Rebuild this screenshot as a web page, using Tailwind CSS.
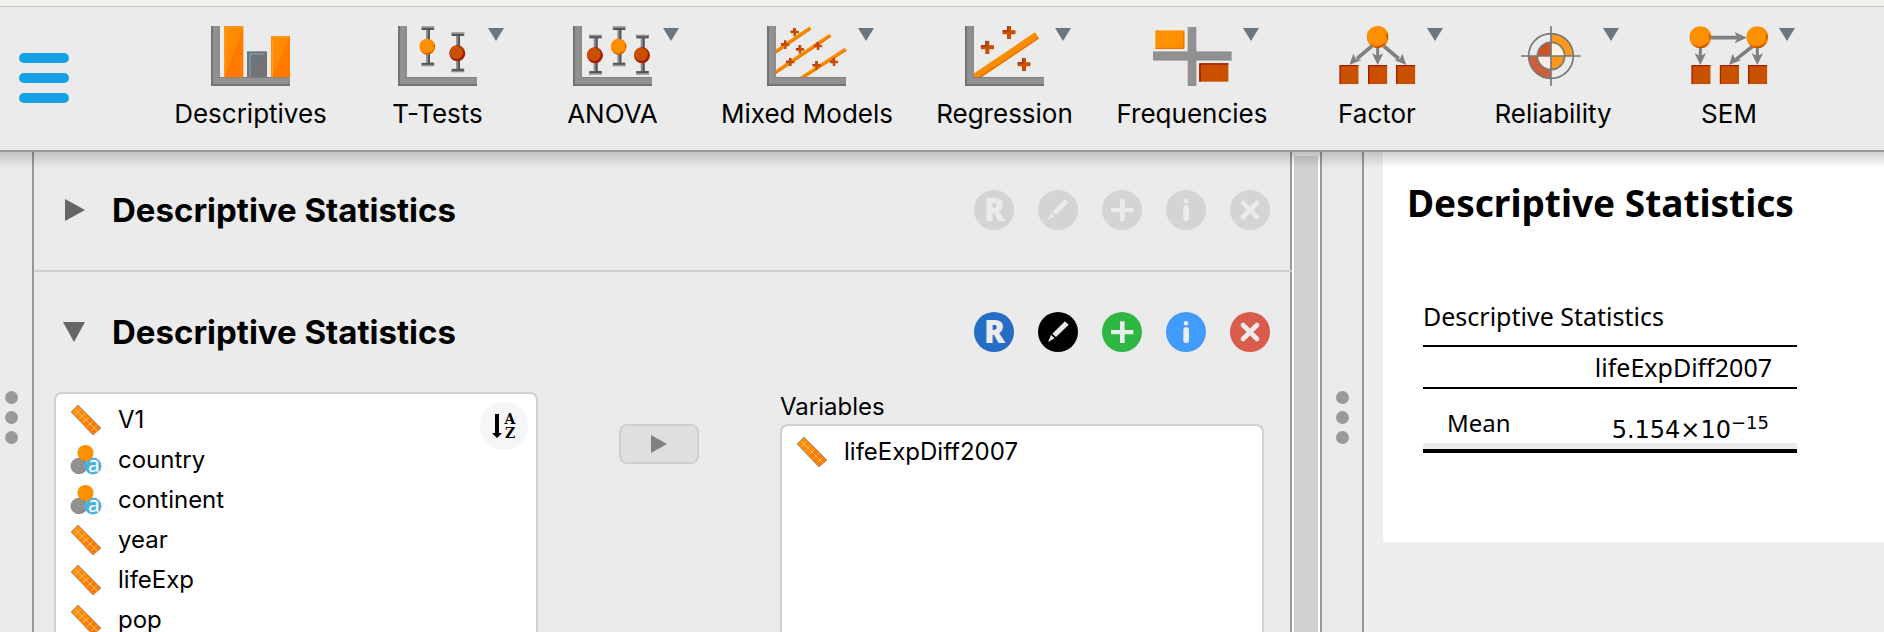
<!DOCTYPE html>
<html lang="en">
<head>
<meta charset="utf-8">
<title>Descriptive Statistics</title>
<script src="https://cdn.jsdelivr.net/npm/@tailwindcss/browser@4"></script>
</head>
<body class="flex h-screen flex-col overflow-hidden bg-[#ebebeb] font-['Inter',sans-serif] text-black">

<!-- Shared icon shapes -->
<svg class="absolute size-0" aria-hidden="true">
  <defs>
    <linearGradient id="orange" x1="0" y1="0" x2="1" y2="1"><stop offset="0" stop-color="#ff9100"/><stop offset=".5" stop-color="#ff8800"/><stop offset=".52" stop-color="#ff7b00"/><stop offset="1" stop-color="#ff7b00"/></linearGradient>
    <linearGradient id="slate" x1="0" y1="0" x2="1" y2="1"><stop offset="0" stop-color="#667681"/><stop offset=".5" stop-color="#6b757c"/><stop offset=".52" stop-color="#737373"/><stop offset="1" stop-color="#737373"/></linearGradient>
    <symbol id="axes" viewBox="0 0 240 180">
      <path d="M0 0H26V153H237V180H0Z" fill="#919191"/>
      <path d="M0 0H6V174H237V180H0Z" fill="#737373"/>
      <path d="M23 0H26V153H237V156H23Z" fill="#808080"/>
    </symbol>
    <symbol id="ebar" viewBox="0 0 48 122" overflow="visible">
      <path d="M5 1H44V12H31V110H44V121H5V110H19V12H5Z" fill="#919191"/>
      <path d="M7 6H42V12H31V110H42V116H7V111H25V12H7Z" fill="#555"/>
    </symbol>
    <symbol id="plus" viewBox="-20 -20 40 40"><path d="M-6-20H6V-6H20V6H6V20H-6V6H-20V-6H-6Z" fill="#c85000"/><path d="M-6-20H-2V-2H-20V-6H-6Z" fill="#b03010"/></symbol>
    <symbol id="ball" viewBox="-33 -33 66 66"><circle r="33" fill="#fb8c00"/><path d="M-24 19A33 33 0 0 0 31 -8L24 -8A27 27 0 0 1 -24 19Z" fill="#c85000"/><circle cx="-3" cy="-4" r="26" fill="#ff9100"/></symbol>
    <symbol id="box" viewBox="0 0 58 58"><path d="M0 0H58V58H0Z" fill="#c85000"/><path d="M0 0H58V4H4V58H0Z" fill="#a81c00"/></symbol>
    <symbol id="caret" viewBox="0 0 16 13"><path d="M0 0H16L8 13Z" fill="#6b7780"/></symbol>
    <symbol id="scale" viewBox="0 0 32 32">
      <path d="M8 1L31 24L23 31L1 8Z" fill="#ff8500" stroke="#999" stroke-width="1"/>
      <path d="M8 2L30 24L23 30L2 8Z" fill="url(#orange)"/>
      <path d="M5 5L27 27M11 5L5 11M15 9L9 15M19 13L13 19M23 17L17 23M27 21L21 27" stroke="#ffb45c" stroke-width="1" fill="none"/>
    </symbol>
    <symbol id="nominal" viewBox="0 0 32 32">
      <circle cx="9" cy="22" r="8" fill="#6f7980"/><circle cx="8" cy="22" r="7.500" fill="#919191"/>
      <circle cx="23" cy="22" r="8.500" fill="#4db1e2"/>
      <circle cx="15.500" cy="9" r="8" fill="#fb8c00"/><circle cx="15" cy="9" r="7" fill="#ff9100"/>
      <text x="24" y="28" text-anchor="middle" font-family="Noto Sans" font-size="21" fill="#fff">a</text>
    </symbol>
    <symbol id="glyph-r" viewBox="0 0 40 40"><circle cx="20" cy="20" r="20"/><text x="20.500" y="30.500" text-anchor="middle" font-family="Open Sans" font-weight="800" font-size="31" fill="#ebebeb">R</text></symbol>
    <symbol id="glyph-edit" viewBox="0 0 120 120"><circle cx="60" cy="60" r="60"/><path d="M81 28L92 38L54 75L43 65ZM39 69L50 79L30 90Z" fill="#ebebeb"/></symbol>
    <symbol id="glyph-add" viewBox="0 0 120 120"><circle cx="60" cy="60" r="60"/><path d="M54 28H68V54H94V67H68V93H54V67H27V54H54Z" fill="#ebebeb"/></symbol>
    <symbol id="glyph-info" viewBox="0 0 120 120"><circle cx="60" cy="60" r="60"/><circle cx="60" cy="34" r="7" fill="#ebebeb"/><rect x="52" y="46" width="17" height="47" rx="7" fill="#ebebeb"/></symbol>
    <symbol id="glyph-close" viewBox="0 0 120 120"><circle cx="60" cy="60" r="60"/><path d="M39 39L81 81M81 39L39 81" stroke="#ebebeb" stroke-width="14" stroke-linecap="round"/></symbol>
  </defs>
</svg>

<div class="h-[7px] shrink-0 border-b border-[#c8c8c8] bg-[#f1f1ee]"></div>

<header class="flex h-[145px] shrink-0 border-b-2 border-[#999]">
  <button class="mt-[46px] ml-[19px] flex h-[50px] w-[50px] shrink-0 flex-col justify-between" aria-label="Menu">
    <span class="h-[10px] w-full rounded-full bg-[#17a1e5]"></span>
    <span class="h-[10px] w-full rounded-full bg-[#17a1e5]"></span>
    <span class="h-[10px] w-full rounded-full bg-[#17a1e5]"></span>
  </button>
  <nav class="ml-[82px] flex pt-[19px] text-[26px] leading-[32px] whitespace-nowrap">
    <button class="flex w-[199px] flex-col items-center gap-3">
      <svg class="h-[60px] w-[80px]" viewBox="0 0 240 180">
        <use href="#axes" width="240" height="180"/>
        <path d="M39 0H97V154H39Z" fill="url(#orange)"/><path d="M42 154V4H94" fill="none" stroke="#ff9d33" stroke-width="3"/>
        <path d="M108 76H168V154H108Z" fill="url(#slate)"/><path d="M117 154V84H160" fill="none" stroke="#8b959b" stroke-width="4"/>
        <path d="M180 30H237V154H180Z" fill="url(#orange)"/><path d="M184 154V34H236" fill="none" stroke="#ff9d33" stroke-width="3"/>
      </svg>
      Descriptives
    </button>
    <button class="relative flex w-[175px] flex-col items-center gap-3">
      <svg class="h-[60px] w-[80px]" viewBox="0 0 240 180">
        <use href="#axes" width="240" height="180"/>
        <use href="#ebar" x="65" y="0" width="48" height="122"/><use href="#ball" x="64" y="38" width="48" height="48"/>
        <use href="#ebar" x="155" y="18" width="48" height="122"/><circle cx="178" cy="82" r="24" fill="#a81c00"/><circle cx="175" cy="79" r="20" fill="#c85000"/>
      </svg>
      T-Tests
      <svg class="absolute top-[2px] left-[138px] h-[13px] w-4"><use href="#caret"/></svg>
    </button>
    <button class="relative flex w-[175px] flex-col items-center gap-3">
      <svg class="h-[60px] w-[80px]" viewBox="0 0 240 180">
        <use href="#axes" width="240" height="180"/>
        <use href="#ebar" x="43" y="25" width="48" height="122"/><circle cx="66" cy="88" r="24" fill="#a81c00"/><circle cx="63" cy="85" r="20" fill="#c85000"/>
        <use href="#ebar" x="114" y="0" width="48" height="122"/><use href="#ball" x="113" y="38" width="48" height="48"/>
        <use href="#ebar" x="184" y="25" width="48" height="122"/><circle cx="207" cy="88" r="24" fill="#a81c00"/><circle cx="204" cy="85" r="20" fill="#c85000"/>
      </svg>
      ANOVA
      <svg class="absolute top-[2px] left-[138px] h-[13px] w-4"><use href="#caret"/></svg>
    </button>
    <button class="relative flex w-[214px] flex-col items-center gap-3">
      <svg class="h-[60px] w-[80px]" viewBox="0 0 240 180">
        <path d="M24 79L130 6M24 140L190 28M100 158L236 70" stroke="#fb8c00" stroke-width="11"/>
        <path d="M26 80L132 9M26 141L192 31M102 159L238 73" stroke="#e67300" stroke-width="3"/>
        <use href="#axes" width="240" height="180"/>
        <use href="#plus" x="70" y="5" width="26" height="26"/><use href="#plus" x="42" y="43" width="26" height="26"/><use href="#plus" x="86" y="57" width="26" height="26"/><use href="#plus" x="140" y="47" width="26" height="26"/><use href="#plus" x="57" y="95" width="26" height="26"/><use href="#plus" x="136" y="105" width="26" height="26"/><use href="#plus" x="188" y="95" width="26" height="26"/>
      </svg>
      Mixed Models
      <svg class="absolute top-[2px] left-[158px] h-[13px] w-4"><use href="#caret"/></svg>
    </button>
    <button class="relative flex w-[181px] flex-col items-center gap-3">
      <svg class="h-[60px] w-[80px]" viewBox="0 0 240 180">
        <path d="M26 156L216 28" stroke="#fb8c00" stroke-width="22"/><path d="M30 164L221 36" stroke="#e67300" stroke-width="4"/>
        <use href="#axes" width="240" height="180"/>
        <use href="#plus" x="112" y="-1" width="40" height="40"/><use href="#plus" x="47" y="44" width="40" height="40"/><use href="#plus" x="157" y="95" width="40" height="40"/>
      </svg>
      Regression
      <svg class="absolute top-[2px] left-[141px] h-[13px] w-4"><use href="#caret"/></svg>
    </button>
    <button class="relative flex w-[194px] flex-col items-center gap-3">
      <svg class="h-[60px] w-[80px]" viewBox="0 0 240 180">
        <path d="M107 3H133V77H239V103H133V180H107V103H3V77H107Z" fill="#919191"/>
        <path d="M3 78H239M3 102H239" stroke="#7f8386" stroke-width="2"/>
        <path d="M107 77H133V103H107Z" fill="#919191"/>
        <path d="M10 13H97V68H10Z" fill="#ff9100"/><path d="M11 67H96M95 16V66" stroke="#ff6a00" stroke-width="4"/>
        <path d="M142 112H229V167H142Z" fill="#c85000"/><path d="M144 167V114H229" fill="none" stroke="#a81c00" stroke-width="5"/>
      </svg>
      Frequencies
      <svg class="absolute top-[2px] left-[148px] h-[13px] w-4"><use href="#caret"/></svg>
    </button>
    <button class="relative flex w-[176px] flex-col items-center gap-3">
      <svg class="h-[60px] w-[80px]" viewBox="0 0 240 180">
        <path d="M105 60L60 98M140 60L185 98" stroke="#808080" stroke-width="11"/><path d="M122 64V96" stroke="#808080" stroke-width="9"/>
        <path d="M37 117L49 83L56 98L74 102ZM208 117L196 83L189 98L171 102ZM122 117L105 82L122 90L139 82Z" fill="#808080"/>
        <use href="#ball" x="89" y="0" width="66" height="66"/>
        <use href="#box" x="7" y="117" width="58" height="58"/><use href="#box" x="93" y="117" width="58" height="58"/><use href="#box" x="177" y="117" width="58" height="58"/>
      </svg>
      Factor
      <svg class="absolute top-[2px] left-[138px] h-[13px] w-4"><use href="#caret"/></svg>
    </button>
    <button class="relative flex w-[176px] flex-col items-center gap-3">
      <svg class="h-[60px] w-[80px]" viewBox="0 0 240 180">
        <path d="M114 90V22A68 68 0 0 1 182 90Z" fill="#fb9a1a"/>
        <path d="M114 90V158A68 68 0 0 1 46 90Z" fill="#cd6038"/>
        <circle cx="114" cy="90" r="41" fill="#fcebe5"/>
        <path d="M114 90H73A41 41 0 0 1 114 49Z" fill="#cb5327"/>
        <path d="M114 90V49A41 41 0 0 1 155 90Z" fill="#fff3e0"/>
        <path d="M114 90H155A41 41 0 0 1 114 131Z" fill="#fb9a1a"/>
        <g fill="none" stroke="#787878" stroke-width="5"><circle cx="114" cy="90" r="67"/><circle cx="114" cy="90" r="41"/><path d="M114 0V180M24 90H203"/></g>
      </svg>
      Reliability
      <svg class="absolute top-[2px] left-[138px] h-[13px] w-4"><use href="#caret"/></svg>
    </button>
    <button class="relative flex w-[176px] flex-col items-center gap-3">
      <svg class="h-[60px] w-[80px]" viewBox="0 0 240 180">
        <path d="M34 64V96M205 64V96" stroke="#808080" stroke-width="9"/>
        <path d="M66 35H148M192 60L141 100" stroke="#808080" stroke-width="11"/>
        <path d="M34 117L17 82L34 90L51 82ZM205 117L188 82L205 90L222 82ZM174 35L137 18L146 35L137 52ZM120 117L131 83L138 98L157 102Z" fill="#808080"/>
        <use href="#ball" x="1" y="1" width="66" height="66"/><use href="#ball" x="172" y="1" width="66" height="66"/>
        <use href="#box" x="7" y="117" width="58" height="58"/><use href="#box" x="92" y="117" width="58" height="58"/><use href="#box" x="177" y="117" width="58" height="58"/>
      </svg>
      SEM
      <svg class="absolute top-[2px] left-[138px] h-[13px] w-4"><use href="#caret"/></svg>
    </button>
  </nav>
</header>

<main class="relative flex min-h-0 flex-1">
  <!-- Shadow cast by the toolbar -->
  <div class="pointer-events-none absolute inset-x-0 top-0 z-10 h-4 bg-linear-to-b from-black/18 to-transparent"></div>

  <div class="flex w-[34px] shrink-0 flex-col items-center gap-[7px] border-r-2 border-[#999] pt-[239px] pr-[10px]">
    <span class="size-[13px] rounded-full bg-[#999]"></span><span class="size-[13px] rounded-full bg-[#999]"></span><span class="size-[13px] rounded-full bg-[#999]"></span>
  </div>

  <div class="flex w-[1258px] shrink-0 flex-col border-r-2 border-[#999]">
    <section class="-mr-[2px] flex h-[120px] shrink-0 items-center border-b-2 border-[#d0d0d0] pr-[22px] pb-[2px] pl-7">
      <button class="flex h-10 w-[50px] items-center pl-[3px]" aria-label="Expand"><svg class="h-[22px] w-[20px]" viewBox="0 0 20 22"><path d="M0 0L20 11L0 22Z" fill="#666"/></svg></button>
      <h2 class="flex-1 text-[33px] leading-10 font-bold">Descriptive Statistics</h2>
      <div class="flex gap-6 text-[#d4d4d4]">
        <button class="size-10" aria-label="Show R syntax"><svg class="size-10 fill-current"><use href="#glyph-r"/></svg></button>
        <button class="size-10" aria-label="Edit title"><svg class="size-10 fill-current"><use href="#glyph-edit"/></svg></button>
        <button class="size-10" aria-label="Duplicate"><svg class="size-10 fill-current"><use href="#glyph-add"/></svg></button>
        <button class="size-10" aria-label="Information"><svg class="size-10 fill-current"><use href="#glyph-info"/></svg></button>
        <button class="size-10" aria-label="Remove"><svg class="size-10 fill-current"><use href="#glyph-close"/></svg></button>
      </div>
    </section>
    <section class="flex h-[120px] shrink-0 items-center pr-5 pl-7">
      <button class="flex h-10 w-[50px] items-center pl-[1px]" aria-label="Collapse"><svg class="h-[20px] w-[22px]" viewBox="0 0 22 20"><path d="M0 0H22L11 20Z" fill="#666"/></svg></button>
      <h2 class="flex-1 text-[33px] leading-10 font-bold">Descriptive Statistics</h2>
      <div class="flex gap-6">
        <button class="size-10 text-[#266dc6]" aria-label="Show R syntax"><svg class="size-10 fill-current"><use href="#glyph-r"/></svg></button>
        <button class="size-10 text-black" aria-label="Edit title"><svg class="size-10 fill-current"><use href="#glyph-edit"/></svg></button>
        <button class="size-10 text-[#2fb744]" aria-label="Duplicate"><svg class="size-10 fill-current"><use href="#glyph-add"/></svg></button>
        <button class="size-10 text-[#409bfa]" aria-label="Information"><svg class="size-10 fill-current"><use href="#glyph-info"/></svg></button>
        <button class="size-10 text-[#d95b4b]" aria-label="Remove"><svg class="size-10 fill-current"><use href="#glyph-close"/></svg></button>
      </div>
    </section>

    <div class="flex min-h-0 flex-1 overflow-hidden pr-[26px] pl-5 text-[24px] leading-10">
      <div class="relative w-[484px] shrink-0 rounded-t-[8px] border-2 border-b-0 border-[#d0d0d0] bg-white pt-[6px] pl-[14px]">
        <ul>
          <li class="flex items-center gap-4"><svg class="size-8"><use href="#scale"/></svg>V1</li>
          <li class="flex items-center gap-4"><svg class="size-8"><use href="#nominal"/></svg>country</li>
          <li class="flex items-center gap-4"><svg class="size-8"><use href="#nominal"/></svg>continent</li>
          <li class="flex items-center gap-4"><svg class="size-8"><use href="#scale"/></svg>year</li>
          <li class="flex items-center gap-4"><svg class="size-8"><use href="#scale"/></svg>lifeExp</li>
          <li class="flex items-center gap-4"><svg class="size-8"><use href="#scale"/></svg>pop</li>
        </ul>
        <button class="absolute top-2 right-2 size-12 rounded-full bg-[#f5f6f7]" aria-label="Sort variables">
          <svg class="size-12" viewBox="0 0 48 48"><path d="M15 12H19V31H22L17 36L12 31H15Z"/><g font-family="DejaVu Serif" font-weight="700" font-size="14" text-anchor="middle"><text x="30" y="22">A</text><text x="30" y="36">Z</text></g></svg>
        </button>
      </div>
      <div class="flex flex-1 justify-center pt-8">
        <button class="flex h-10 w-20 items-center justify-center rounded-[8px] border-2 border-[#d0d0d0] bg-[#dfdfdf]" aria-label="Move variable"><svg class="h-[18px] w-4" viewBox="0 0 16 18"><path d="M0 0L16 9L0 18Z" fill="#808080"/></svg></button>
      </div>
      <div class="flex w-[484px] shrink-0 flex-col">
        <h3 class="h-8 leading-[30px]">Variables</h3>
        <ul class="flex-1 rounded-t-[8px] border-2 border-b-0 border-[#d0d0d0] bg-white pt-[6px] pl-[14px]">
          <li class="flex items-center gap-4"><svg class="size-8"><use href="#scale"/></svg>lifeExpDiff2007</li>
        </ul>
      </div>
    </div>
  </div>

  <!-- Scroll bar -->
  <div class="flex w-7 shrink-0 flex-col bg-white px-[2px]"><div class="-mx-[2px] h-1 bg-[#ebebeb]"></div><div class="flex-1 bg-[#d0d0d0]"></div></div>

  <div class="flex w-11 shrink-0 flex-col items-center gap-[7px] border-x-2 border-[#999] pt-[239px]">
    <span class="size-[13px] rounded-full bg-[#999]"></span><span class="size-[13px] rounded-full bg-[#999]"></span><span class="size-[13px] rounded-full bg-[#999]"></span>
  </div>

  <div class="min-w-0 flex-1 bg-[#eee] pl-[19px] font-['Noto_Sans',sans-serif]">
    <div class="h-[390px] bg-white pt-[26px] pl-6">
      <h1 class="text-[37px] leading-[50px] font-bold whitespace-nowrap">Descriptive Statistics</h1>
      <table class="mt-[70px] ml-4 w-[374px] border-collapse border-b-4 border-black text-[25px] leading-8">
        <caption class="h-[47px] text-left leading-[36px]">Descriptive Statistics</caption>
        <thead>
          <tr class="h-[42px] border-y-2 border-black"><td></td><th class="pr-[25px] text-right font-normal" scope="col">lifeExpDiff2007</th></tr>
        </thead>
        <tbody class="text-[24px]">
          <tr class="h-[63px]"><th class="pt-2 pl-6 text-left font-normal shadow-[inset_0_-6px_0_#ebebeb]" scope="row">Mean</th><td class="pt-[22px] pr-7 text-right font-['DejaVu_Sans'] shadow-[inset_0_-6px_0_#ebebeb]">5.154×10<sup class="text-[18px]">−15</sup></td></tr>
        </tbody>
      </table>
    </div>
  </div>
</main>
</body>
</html>
